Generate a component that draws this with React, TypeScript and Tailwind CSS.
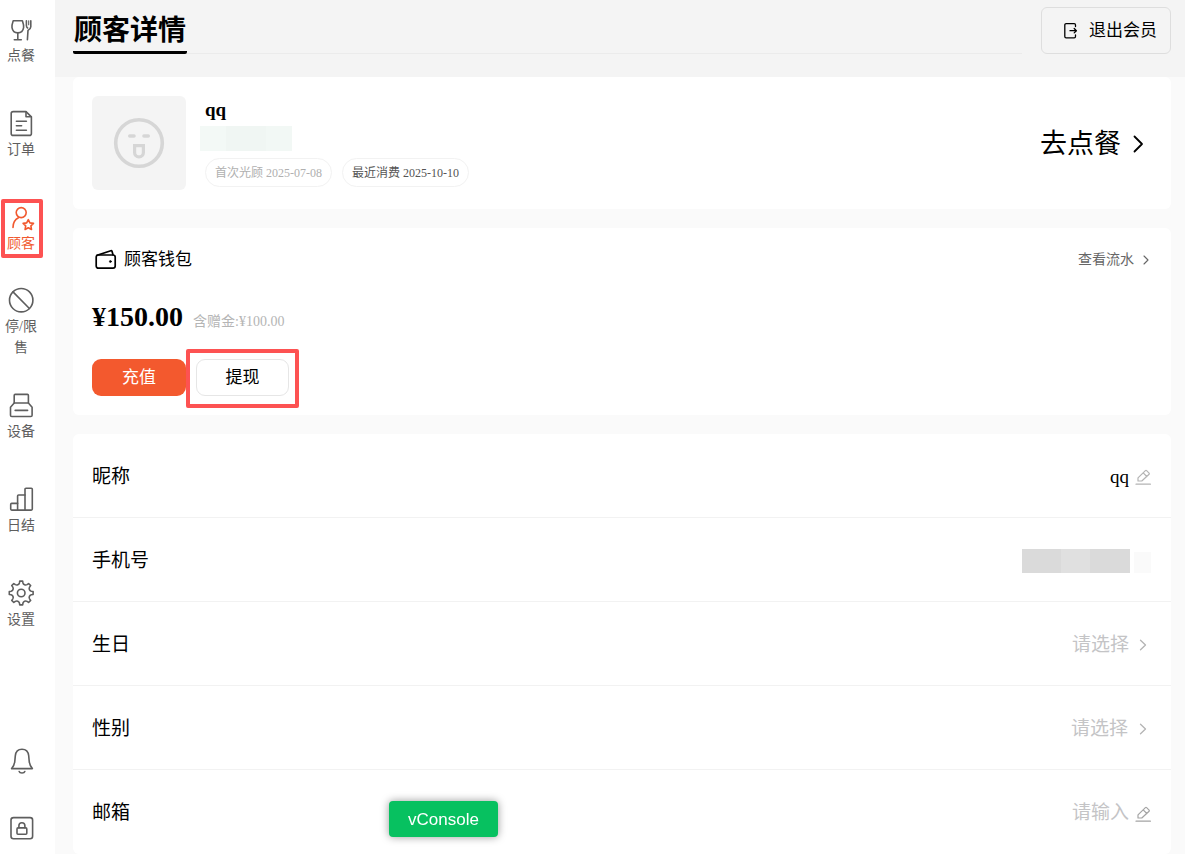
import type { ReactElement, ReactNode } from 'react'

interface IconProps {
  className?: string
}

interface NavItem {
  id: string
  label: string
  icon: ReactElement
  active?: boolean
}

interface StrokeIconProps extends IconProps {
  size: number
  strokeWidth?: number
  children: ReactNode
}

function StrokeIcon({
  size,
  strokeWidth = 1.6,
  className,
  children,
}: StrokeIconProps): ReactElement {
  return (
    <svg
      width={size}
      height={size}
      viewBox={`0 0 ${size} ${size}`}
      fill="none"
      stroke="currentColor"
      strokeWidth={strokeWidth}
      strokeLinecap="round"
      strokeLinejoin="round"
      aria-hidden="true"
      className={className}
    >
      {children}
    </svg>
  )
}

function gearPath(cx: number, cy: number): string {
  const point = (deg: number, r: number) => {
    const rad = (deg * Math.PI) / 180
    return `${(cx + r * Math.cos(rad)).toFixed(2)} ${(cy + r * Math.sin(rad)).toFixed(2)}`
  }
  const teeth = Array.from({ length: 8 }, (_, i) => {
    const a = i * 45
    return `${i === 0 ? 'M' : 'L'}${point(a - 7, 12)}L${point(a + 7, 12)}L${point(a + 10, 10.2)}A2.8 2.8 0 0 0 ${point(a + 35, 10.2)}`
  })
  return `${teeth.join('')}Z`
}

const navItems: NavItem[] = [
  {
    id: 'order',
    label: '点餐',
    icon: (
      <StrokeIcon size={28}>
        <path d="M6.2 4.7h9.2c.9 2.6 1.6 4.8 1.2 7-.5 3.1-2.8 5.2-5.8 5.2s-5.3-2.1-5.8-5.2c-.4-2.2.3-4.4 1.2-7z" />
        <path d="M10.8 17v6.6M7.3 23.7h7" />
        <path d="M19.4 4.8v4.600c0 1.400.4 2 1.200 2.600M23.800 4.800v6c0 1.800-1 2.600-2.800 3.600l-.6 9.400" />
        <path d="M21.700 4.800v4" strokeWidth={1.1} />
      </StrokeIcon>
    ),
  },
  {
    id: 'bills',
    label: '订单',
    icon: (
      <StrokeIcon size={28}>
        <path d="M6.2 1.6H19l5.4 5.2v16.6a2 2 0 0 1-2 2H6.2a2 2 0 0 1-2-2V3.6a2 2 0 0 1 2-2z" />
        <path d="M19 1.8v5h5.2M9.4 11.2h10M9.4 15.7h5.2M9.4 20.3h10" />
      </StrokeIcon>
    ),
  },
  {
    id: 'customers',
    label: '顾客',
    active: true,
    icon: (
      <StrokeIcon size={28}>
        <circle cx="14.2" cy="8.6" r="5" />
        <path d="M6 23.4c0-4.6 2-7.8 5.4-9.6" />
        <path d="M21.3 15.6l1.6 3.3 3.6.5-2.6 2.5.6 3.6-3.2-1.7-3.2 1.7.6-3.6-2.6-2.5 3.6-.5z" />
      </StrokeIcon>
    ),
  },
  {
    id: 'soldout',
    label: '停/限售',
    icon: (
      <StrokeIcon size={28}>
        <circle cx="14.2" cy="13.2" r="11.7" />
        <path d="M6 4.9l16.4 16.6" />
      </StrokeIcon>
    ),
  },
  {
    id: 'devices',
    label: '设备',
    icon: (
      <StrokeIcon size={28}>
        <path d="M7.2 11V3.4a1 1 0 0 1 1-1h12.2a1 1 0 0 1 1 1V11" />
        <path d="M7.2 11h14.2l3.7 4.2v8a1.3 1.3 0 0 1-1.3 1.3H4.8a1.3 1.3 0 0 1-1.3-1.3v-8z" />
        <path d="M8.2 18.4h12.4" />
      </StrokeIcon>
    ),
  },
  {
    id: 'daily',
    label: '日结',
    icon: (
      <StrokeIcon size={28}>
        <path d="M10.6 24V10a1 1 0 0 1 1-1H18" />
        <path d="M10.6 17.4H4.7a1 1 0 0 0-1 1v4.7a1 1 0 0 0 1 1h19.6a1 1 0 0 0 1-1V3.2a1 1 0 0 0-1-1H19a1 1 0 0 0-1 1V24" />
      </StrokeIcon>
    ),
  },
  {
    id: 'settings',
    label: '设置',
    icon: (
      <StrokeIcon size={28}>
        <path d={gearPath(14.2, 13)} />
        <circle cx="14.2" cy="13" r="3.8" />
      </StrokeIcon>
    ),
  },
]

function BellIcon(): ReactElement {
  return (
    <StrokeIcon size={28}>
      <path d="M4.6 21.6h20.8c-2-2-2.8-3.6-3.2-7.4l-.5-5.4c-.4-4-3-6.6-6.7-6.6S8.7 4.8 8.3 8.8l-.5 5.4c-.4 3.8-1.2 5.4-3.2 7.4z" />
      <path d="M12.2 24.5c.6 2 5 2 5.6 0" />
    </StrokeIcon>
  )
}

function LockIcon(): ReactElement {
  return (
    <StrokeIcon size={28}>
      <rect x="4" y="3.6" width="21.6" height="21.2" rx="2.5" />
      <rect x="10" y="13.9" width="9.8" height="6.4" rx="1" />
      <path d="M11.9 13.7v-2a3 3 0 0 1 6 0v2" />
    </StrokeIcon>
  )
}

function FaceIcon({ className }: IconProps): ReactElement {
  return (
    <StrokeIcon size={52} strokeWidth={3.6} className={className}>
      <circle cx="26" cy="26" r="23.3" />
      <path d="M16.800 19h4.200M31 19h4.200" />
      <path
        d="M21.600 28.600h8.800v6.800c0 2.500-1.800 4.400-4.400 4.400s-4.400-1.900-4.400-4.400z"
        strokeWidth={3.2}
        strokeLinejoin="miter"
      />
    </StrokeIcon>
  )
}

function ExitIcon(): ReactElement {
  return (
    <StrokeIcon size={18} strokeWidth={1.3}>
      <path d="M13.5 4.600V3a1.300 1.300 0 0 0-1.300-1.300H4.100A1.300 1.300 0 0 0 2.800 3v11.600a1.300 1.300 0 0 0 1.300 1.300h8.100a1.300 1.300 0 0 0 1.300-1.300V13" />
      <path d="M8 8.700h6.200M12.200 6.500l2.200 2.200-2.200 2.200" />
    </StrokeIcon>
  )
}

function WalletIcon(): ReactElement {
  return (
    <StrokeIcon size={24} strokeWidth={1.7}>
      <rect x="2.200" y="7" width="19" height="13.200" rx="2.200" />
      <path d="M3 7.300l13.800-4.600a1 1 0 0 1 1.200.6L19 6.800" />
      <circle cx="16.400" cy="13.500" r="1" fill="currentColor" strokeWidth={0.6} />
    </StrokeIcon>
  )
}

function EditIcon({ className }: IconProps): ReactElement {
  return (
    <StrokeIcon size={16} strokeWidth={1.2} className={className}>
      <path d="M1 15.200h14.400" />
      <path d="M3 12V8.900l7.400-7.300a.9.9 0 0 1 1.200 0l2.500 2.500a.9.9 0 0 1 0 1.200L6.800 12zM8.200 3.900l3.600 3.600" />
    </StrokeIcon>
  )
}

function SmallChevron({ className }: IconProps): ReactElement {
  return (
    <StrokeIcon size={12} strokeWidth={1.3} className={className}>
      <path d="M3.500 1.200L8.500 6l-5 4.800" />
    </StrokeIcon>
  )
}

function Sidebar(): ReactElement {
  return (
    <aside className="sticky top-0 flex h-screen w-[55px] shrink-0 flex-col justify-between overflow-hidden bg-white pr-[13px] text-[#5e5e5e]">
      <nav className="-mt-[7px] flex flex-col">
        {navItems.map((item) => (
          <a
            key={item.id}
            href={`#${item.id}`}
            className={`relative flex h-[94px] flex-col items-center justify-center gap-px pt-px ${
              item.active ? 'text-[#f1592f]' : ''
            }`}
          >
            {item.icon}
            <span className="w-9 text-center text-sm leading-[21px]">{item.label}</span>
            {item.active && (
              <span className="absolute -right-px bottom-[17px] left-px top-[18px] rounded-xs border-4 border-[#fd5252]" />
            )}
          </a>
        ))}
      </nav>
      <div className="flex flex-col items-center gap-[39px] pb-3">
        <button type="button" aria-label="消息">
          <BellIcon />
        </button>
        <button type="button" aria-label="锁屏">
          <LockIcon />
        </button>
      </div>
    </aside>
  )
}

function PageHeader(): ReactElement {
  return (
    <header className="flex h-[77px] items-start gap-[19px] bg-[#f4f4f4] pl-[18px] pr-[14px] pt-[7px]">
      <div className="flex h-[47px] flex-1 border-b border-[#ebebeb]">
        <h1 className="-mb-px flex items-center rounded-xs border-b-3 border-black px-px pt-1 text-[28px] font-bold text-black">
          顾客详情
        </h1>
      </div>
      <button
        type="button"
        className="flex h-[47px] items-center gap-[9px] rounded-md border border-[#dedede] pl-5 pr-[13px] text-[17px] text-black"
      >
        <ExitIcon />
        退出会员
      </button>
    </header>
  )
}

function ProfileCard(): ReactElement {
  return (
    <section className="flex items-center rounded-md bg-white p-[19px] pr-6">
      <div className="flex size-[94px] shrink-0 items-center justify-center rounded-md bg-[#f4f4f4]">
        <FaceIcon className="text-[#d6d6d6]" />
      </div>
      <div className="ml-[19px] flex-1 self-start">
        <h2 className="text-[19px] font-bold leading-7 text-black">qq</h2>
        <div className="-ml-[5px] mt-0.5 flex h-[25px]">
          <span className="w-[26px] bg-[#f3f9f6]" />
          <span className="w-10 bg-[#f0f6f3]" />
          <span className="w-[26px] bg-[#f2f8f5]" />
        </div>
        <div className="mt-[7px] flex gap-2.5 text-xs">
          <span className="flex h-[29px] items-center rounded-full border border-[#f2f2f2] px-[9px] text-[#b0b0b0]">
            首次光顾 2025-07-08
          </span>
          <span className="flex h-[29px] items-center rounded-full border border-[#f2f2f2] px-[9px] text-[#555555]">
            最近消费 2025-10-10
          </span>
        </div>
      </div>
      <a href="#order" className="flex items-center gap-2 pt-0.5 text-[27px] text-black">
        去点餐
        <StrokeIcon size={18} strokeWidth={1.8}>
          <path d="M5.500 1.500L13 9l-7.500 7.500" />
        </StrokeIcon>
      </a>
    </section>
  )
}

function WalletCard(): ReactElement {
  return (
    <section className="rounded-md bg-white p-[19px]">
      <div className="flex h-[26px] items-center justify-between">
        <h2 className="flex items-center gap-1.5 pl-0.5 text-[17px] text-black">
          <WalletIcon />
          顾客钱包
        </h2>
        <a href="#records" className="flex items-center gap-1.5 text-sm text-[#666666]">
          查看流水
          <StrokeIcon size={12} strokeWidth={1.1}>
            <path d="M4 2l4 4-4 4" />
          </StrokeIcon>
        </a>
      </div>
      <p className="mt-[26px] flex h-9 items-baseline gap-2.5">
        <span className="text-[28px] font-bold leading-9 text-black">¥150.00</span>
        <span className="text-sm text-[#b5b5b5]">含赠金:¥100.00</span>
      </p>
      <div className="mt-6 flex gap-2.5 text-[17px]">
        <button type="button" className="h-[37px] w-[94px] rounded-[9px] bg-[#f3592e] text-white">
          充值
        </button>
        <div className="relative">
          <button
            type="button"
            className="h-[37px] w-[93px] rounded-[9px] border border-[#e6e6e6] text-black"
          >
            提现
          </button>
          <span className="pointer-events-none absolute -inset-x-2.5 -bottom-3 -top-2.5 rounded-xs border-4 border-[#fd5252]" />
        </div>
      </div>
    </section>
  )
}

interface InfoRowProps {
  label: string
  htmlFor?: string
  children: ReactNode
}

function InfoRow({ label, htmlFor, children }: InfoRowProps): ReactElement {
  return (
    <div className="flex h-[84px] items-center justify-between border-b border-[#f2f2f2] pl-[19px] pr-5 pt-[3px] text-[19px] last:border-b-0">
      <label htmlFor={htmlFor} className="text-black">
        {label}
      </label>
      <div className="flex items-center gap-1.5 text-[#c4c4c6]">{children}</div>
    </div>
  )
}

function InfoCard(): ReactElement {
  return (
    <section className="rounded-md bg-white">
      <InfoRow label="昵称" htmlFor="nickname">
        <input
          id="nickname"
          defaultValue="qq"
          className="w-60 text-right text-black outline-none"
        />
        <EditIcon className="text-[#b4b4b4]" />
      </InfoRow>
      <InfoRow label="手机号">
        <div className="flex items-end gap-1">
          <span className="flex h-6">
            <span className="w-[39px] bg-[#dadada]" />
            <span className="w-[29px] bg-[#e0e0e0]" />
            <span className="w-10 bg-[#dadada]" />
          </span>
          <span className="h-[21px] w-[17px] bg-[#fafafa]" />
        </div>
      </InfoRow>
      <InfoRow label="生日" htmlFor="birthday">
        <button id="birthday" type="button" className="flex items-center gap-2">
          请选择
          <SmallChevron className="mr-0.5 text-[#b4b4b4]" />
        </button>
      </InfoRow>
      <InfoRow label="性别" htmlFor="gender">
        <select id="gender" className="appearance-none outline-none">
          <option>请选择</option>
        </select>
        <SmallChevron className="mx-0.5 text-[#b4b4b4]" />
      </InfoRow>
      <InfoRow label="邮箱" htmlFor="email">
        <input
          id="email"
          type="email"
          placeholder="请输入"
          className="w-60 text-right text-black outline-none placeholder:text-[#c4c4c6]"
        />
        <EditIcon className="text-[#a4a4a4]" />
      </InfoRow>
    </section>
  )
}

export default function App(): ReactElement {
  return (
    <div className="flex min-h-screen bg-[#fafafa] font-['Liberation_Serif','Noto_Sans_CJK_SC',serif]">
      <Sidebar />
      <div className="min-w-0 flex-1">
        <PageHeader />
        <main className="flex flex-col gap-[19px] pl-[18px] pr-[14px]">
          <ProfileCard />
          <WalletCard />
          <InfoCard />
        </main>
      </div>
      <button
        type="button"
        className="fixed bottom-[17px] left-[389px] h-9 rounded-sm bg-[#07c160] px-[19px] pt-0.5 font-['Liberation_Sans',sans-serif] text-[17px] text-white shadow-[0_0_8px_rgba(0,0,0,0.4)]"
      >
        vConsole
      </button>
    </div>
  )
}
